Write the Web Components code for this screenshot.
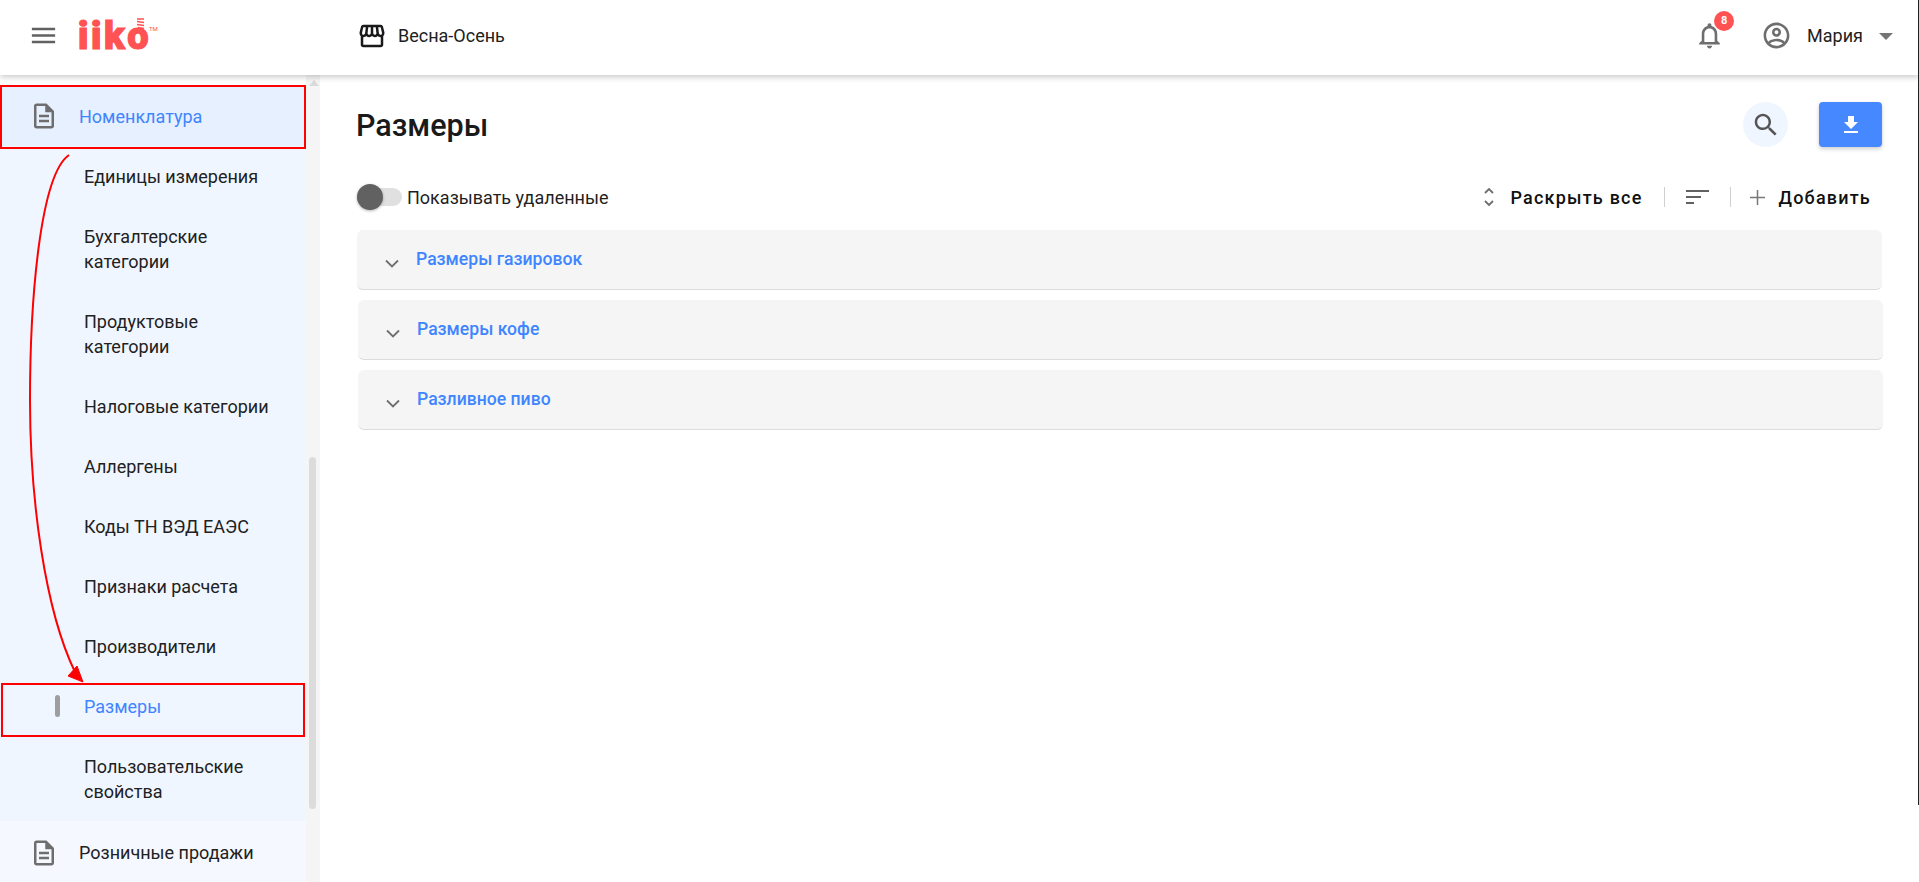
<!DOCTYPE html>
<html lang="ru">
<head>
<meta charset="utf-8">
<title>Размеры</title>
<style>
  html, body {
    margin: 0;
    height: 882px;
    overflow: hidden;
    background: #fff;
    font-family: Roboto, 'Liberation Sans', sans-serif;
    color: #1f1f1f;
  }
</style>
</head>
<body>

<app-page>
  <top-bar slot="header" store="Весна-Осень" user="Мария" count="8"></top-bar>

  <side-nav slot="nav">
    <nav-item icon="doc" active>Номенклатура</nav-item>
    <nav-item sub>Единицы измерения</nav-item>
    <nav-item sub>Бухгалтерские<br>категории</nav-item>
    <nav-item sub>Продуктовые<br>категории</nav-item>
    <nav-item sub>Налоговые категории</nav-item>
    <nav-item sub>Аллергены</nav-item>
    <nav-item sub>Коды ТН ВЭД ЕАЭС</nav-item>
    <nav-item sub>Признаки расчета</nav-item>
    <nav-item sub>Производители</nav-item>
    <nav-item sub active>Размеры</nav-item>
    <nav-item sub>Пользовательские<br>свойства</nav-item>
    <nav-item icon="doc" muted>Розничные продажи</nav-item>
  </side-nav>

  <sizes-view slot="main">
    <accordion-row>Размеры газировок</accordion-row>
    <accordion-row shifted>Размеры кофе</accordion-row>
    <accordion-row shifted>Разливное пиво</accordion-row>
  </sizes-view>

  <red-marks slot="overlay"></red-marks>
</app-page>

<script>
  const ICONS = {
    menu: 'M3 18h18v-2H3v2zm0-5h18v-2H3v2zm0-7v2h18V6H3z',
    doc: 'M14 2H6c-1.1 0-2 .9-2 2v16c0 1.1.89 2 1.99 2H18c1.1 0 2-.9 2-2V8l-6-6zm4 18H6V4h7v5h5v11zM8 15h8v2H8zm0-4h8v2H8z',
    store: 'M21.9 8.89l-1.05-4.37c-.22-.9-1-1.52-1.91-1.52H5.05c-.9 0-1.69.63-1.9 1.52L2.1 8.89c-.24 1.02-.02 2.06.62 2.88.08.11.19.19.28.29V19c0 1.1.9 2 2 2h14c1.1 0 2-.9 2-2v-6.94c.09-.09.2-.18.28-.28.64-.82.87-1.87.62-2.89zm-2.99-3.9l1.05 4.37c.1.42.01.84-.25 1.17-.14.18-.44.47-.94.47-.61 0-1.14-.49-1.21-1.14L16.98 5l1.93-.01zM13 5h1.96l.54 4.52c.05.39-.07.78-.33 1.07-.22.26-.54.41-.95.41-.67 0-1.22-.59-1.22-1.31V5zM8.49 9.52L9.04 5H11v4.69c0 .72-.55 1.31-1.29 1.31-.34 0-.65-.15-.89-.41-.25-.29-.37-.68-.33-1.07zm-4.45-.16L5.05 5h1.97l-.58 4.86c-.08.65-.6 1.14-1.21 1.14-.49 0-.8-.29-.93-.47-.27-.32-.36-.75-.26-1.17zM5 19v-6.03c.08.01.15.03.23.03.87 0 1.66-.36 2.24-.95.6.6 1.4.95 2.31.95.87 0 1.65-.36 2.23-.93.59.57 1.39.93 2.29.93.84 0 1.64-.35 2.24-.95.58.59 1.37.95 2.24.95.08 0 .15-.02.23-.03V19H5z',
    bell: 'M12 22c1.1 0 2-.9 2-2h-4c0 1.1.9 2 2 2zm6-6v-5c0-3.07-1.63-5.64-4.5-6.32V4c0-.83-.67-1.5-1.5-1.5s-1.5.67-1.5 1.5v.68C7.64 5.36 6 7.92 6 11v5l-2 2v1h16v-1l-2-2zm-2 1H8v-6c0-2.48 1.51-4.5 4-4.5s4 2.02 4 4.5v6z',
    user: 'M12 2C6.48 2 2 6.48 2 12s4.48 10 10 10 10-4.48 10-10S17.52 2 12 2zM7.07 18.28c.43-.9 3.05-1.78 4.93-1.78s4.51.88 4.93 1.78C15.57 19.36 13.86 20 12 20s-3.57-.64-4.93-1.72zm11.29-1.45c-1.43-1.74-4.9-2.33-6.36-2.33s-4.93.59-6.36 2.33C4.62 15.49 4 13.82 4 12c0-4.41 3.59-8 8-8s8 3.59 8 8c0 1.82-.62 3.49-1.64 4.83zM12 6c-1.94 0-3.5 1.56-3.5 3.5S10.06 13 12 13s3.5-1.56 3.5-3.5S13.94 6 12 6zm0 5c-.83 0-1.5-.67-1.5-1.5S11.17 8 12 8s1.5.67 1.5 1.5S12.83 11 12 11z',
    search: 'M15.5 14h-.79l-.28-.27C15.41 12.59 16 11.11 16 9.5 16 5.91 13.09 3 9.5 3S3 5.91 3 9.5 5.91 16 9.5 16c1.61 0 3.09-.59 4.23-1.57l.27.28v.79l5 4.99L20.49 19l-4.99-5zm-6 0C7.01 14 5 11.99 5 9.5S7.01 5 9.5 5 14 7.01 14 9.5 11.99 14 9.5 14z',
    download: 'M19 9h-4V3H9v6H5l7 7 7-7zM5 18v2h14v-2H5z'
  };

  function icon(name, size, color) {
    return `<svg width="${size}" height="${size}" viewBox="0 0 24 24" fill="${color}" style="display:block;flex:none"><path d="${ICONS[name]}"/></svg>`;
  }

  class AppPage extends HTMLElement {
    constructor() {
      super();
      this.attachShadow({ mode: 'open' }).innerHTML = `
        <style>
          :host {
            display: grid;
            grid-template-rows: 75px 807px;
            grid-template-columns: 320px 1599px;
            height: 882px;
            position: relative;
          }
          .head { grid-column: 1 / 3; z-index: 2; }
          .nav, .main { min-height: 0; overflow: hidden; }
        </style>
        <div class="head"><slot name="header"></slot></div>
        <div class="nav"><slot name="nav"></slot></div>
        <div class="main"><slot name="main"></slot></div>
        <slot name="overlay"></slot>`;
    }
  }

  class TopBar extends HTMLElement {
    connectedCallback() {
      this.attachShadow({ mode: 'open' }).innerHTML = `
        <style>
          :host {
            display: flex;
            align-items: center;
            height: 75px;
            box-sizing: border-box;
            padding-bottom: 4px;
            background: #fff;
            box-shadow: 0 2px 6px rgba(0,0,0,.22);
            font-size: 18px;
            color: #212121;
          }
          .burger { margin-left: 28px; }
          .logo {
            margin-left: 19px;
            width: 76px;
            position: relative;
            font-weight: 900;
            font-size: 38px;
            line-height: 40px;
            letter-spacing: 2.5px;
            color: #ff5252;
            -webkit-text-stroke: 1.2px #ff5252;
          }
          .logo small {
            position: absolute;
            left: 71px;
            top: 9px;
            font-size: 6px;
            line-height: 7px;
            letter-spacing: 0;
            font-weight: 400;
            -webkit-text-stroke: 0;
          }
          .logo svg { position: absolute; left: 58px; top: 2px; }
          .store { margin-left: 203px; }
          .name { margin-left: 11px; }
          .bell { margin-left: auto; position: relative; }
          .badge {
            position: absolute;
            left: 20px;
            top: -9px;
            width: 20px;
            height: 20px;
            border-radius: 50%;
            background: #ff5252;
            color: #fff;
            font-size: 11px;
            font-weight: 700;
            line-height: 20px;
            text-align: center;
          }
          .user { margin-left: 36px; }
          .who { margin-left: 15px; }
          .caret {
            margin: 1px 26px 0 16px;
            border-left: 7px solid transparent;
            border-right: 7px solid transparent;
            border-top: 7px solid #757575;
          }
        </style>
        <div class="burger">${icon('menu', 31, '#616161')}</div>
        <div class="logo">iiko<small>TM</small>
          <svg width="9" height="11" viewBox="0 0 9 11" fill="none" stroke="#ff5252" stroke-width="1.5"><path d="M1 1h7M1 3.500l7 1M1 6.500l7 1M2 9.500l6 1"/></svg>
        </div>
        <div class="store">${icon('store', 30, '#1a1a1a')}</div>
        <div class="name">${this.getAttribute('store')}</div>
        <div class="bell">${icon('bell', 31, '#6e6e6e')}<span class="badge">${this.getAttribute('count')}</span></div>
        <div class="user">${icon('user', 31, '#6e6e6e')}</div>
        <div class="who">${this.getAttribute('user')}</div>
        <div class="caret"></div>`;
    }
  }

  class SideNav extends HTMLElement {
    constructor() {
      super();
      this.attachShadow({ mode: 'open' }).innerHTML = `
        <style>
          :host { display: flex; height: 807px; }
          .list { width: 306px; padding-top: 11px; box-sizing: border-box; display: flex; flex-direction: column; }
          .track { width: 14px; background: #f5f5f5; position: relative; }
          .arrow {
            position: absolute; left: 3px; top: 5px;
            border-left: 5px solid transparent;
            border-right: 5px solid transparent;
            border-bottom: 6px solid #dadada;
          }
          .thumb {
            position: absolute; left: 3px; top: 382px;
            width: 7px; height: 352px;
            border-radius: 4px;
            background: #dcdcdc;
          }
        </style>
        <div class="list"><slot></slot></div>
        <div class="track"><div class="arrow"></div><div class="thumb"></div></div>`;
    }
  }

  class NavItem extends HTMLElement {
    connectedCallback() {
      const ic = this.getAttribute('icon');
      this.attachShadow({ mode: 'open' }).innerHTML = `
        <style>
          :host {
            display: flex;
            align-items: center;
            padding: 18px 0 17px 84px;
            background: #f0f6ff;
            font-size: 18px;
            line-height: 25px;
            color: #212121;
            position: relative;
          }
          :host([icon]) { padding: 0 0 0 29px; height: 60px; flex: none; }
          :host([icon][active]) { background: #e6f0fe; color: #3f85ff; }
          :host([sub][active]) { color: #3f85ff; }
          :host([muted]) { background: #f5f8fe; height: 61px; padding-top: 2px; box-sizing: border-box; }
          .ic { margin-right: 20px; }
          .mark {
            position: absolute;
            left: 55px; top: 19px;
            width: 5px; height: 22px;
            border-radius: 3px;
            background: #9e9e9e;
          }
        </style>
        ${ic ? `<div class="ic">${icon(ic, 30, '#6e6e6e')}</div>` : ''}
        ${this.hasAttribute('sub') && this.hasAttribute('active') ? '<div class="mark"></div>' : ''}
        <div><slot></slot></div>`;
    }
  }

  class SizesView extends HTMLElement {
    constructor() {
      super();
      this.attachShadow({ mode: 'open' }).innerHTML = `
        <style>
          :host {
            display: block;
            padding: 27px 36px 0 37px;
            color: #1f1f1f;
          }
          .title { display: flex; align-items: center; height: 45px; }
          h1 { margin: 2px 0 0 -1px; font-size: 30.5px; font-weight: 500; color: #1a1a1a; flex: 1; }
          .round {
            width: 45px; height: 45px; border-radius: 50%;
            background: #f0f6ff;
            display: flex; align-items: center; justify-content: center;
            margin-right: 31px;
          }
          .save {
            width: 63px; height: 45px; border-radius: 4px;
            background: #4588ff;
            box-shadow: 0 2px 4px rgba(0,0,0,.2);
            display: flex; align-items: center; justify-content: center;
            margin-right: 1px;
          }
          .tools { display: flex; align-items: center; height: 40px; margin-top: 30px; padding-right: 12px; }
          .tool { font-size: 18px; font-weight: 500; letter-spacing: 1.2px; color: #111; }
          .sep { width: 1px; height: 20px; background: #d0d0d0; }
          .list { display: flex; flex-direction: column; gap: 10px; margin-top: 13px; }
        </style>
        <div class="title">
          <h1>Размеры</h1>
          <div class="round">${icon('search', 30, '#555')}</div>
          <div class="save">${icon('download', 24, '#fff')}</div>
        </div>
        <div class="tools">
          <del-toggle>Показывать удаленные</del-toggle>
          <svg style="margin-left:auto" width="10" height="20" viewBox="0 0 10 20" fill="none" stroke="#6e6e6e" stroke-width="1.8"><path d="M1 6l4-4 4 4M1 14l4 4 4-4"/></svg>
          <span class="tool" style="margin-left:16px">Раскрыть все</span>
          <span class="sep" style="margin-left:21px"></span>
          <svg style="margin-left:21px" width="23" height="16" viewBox="0 0 23 16" fill="#616161"><rect width="23" height="2" y="1"/><rect width="15" height="2" y="7"/><rect width="8" height="2" y="13"/></svg>
          <span class="sep" style="margin-left:21px"></span>
          <svg style="margin-left:19px" width="15" height="15" viewBox="0 0 15 15" stroke="#777" stroke-width="1.5"><path d="M7.5 0v15M0 7.500h15"/></svg>
          <span class="tool" style="margin-left:14px">Добавить</span>
        </div>
        <div class="list"><slot></slot></div>`;
    }
  }

  class DelToggle extends HTMLElement {
    constructor() {
      super();
      this.attachShadow({ mode: 'open' }).innerHTML = `
        <style>
          :host { display: flex; align-items: center; font-size: 18px; color: #1f1f1f; }
          .sw { width: 45px; height: 26px; position: relative; margin-right: 5px; }
          .bar { position: absolute; left: 0; right: 0; top: 4px; height: 18px; border-radius: 9px; background: #e0e0e0; }
          .knob {
            position: absolute; left: 0; top: 0; width: 26px; height: 26px; border-radius: 50%;
            background: #616161;
            box-shadow: 0 1px 3px rgba(0,0,0,.3);
          }
        </style>
        <div class="sw"><div class="bar"></div><div class="knob"></div></div>
        <slot></slot>`;
    }
  }

  class AccordionRow extends HTMLElement {
    constructor() {
      super();
      this.attachShadow({ mode: 'open' }).innerHTML = `
        <style>
          :host {
            display: flex;
            height: 60px;
            box-sizing: border-box;
            margin-right: 1px;
            align-items: center;
            background: #f5f5f5;
            border-radius: 6px;
            border-bottom: 1px solid #dcdcdc;
            font-size: 17.6px;
            font-weight: 500;
            color: #3f85ff;
          }
          :host([shifted]) { margin: 0 0 0 1px; }
          svg { margin: 8px 17px 0 28px; flex: none; }
          div { margin-top: -2px; }
        </style>
        <svg width="14" height="10" viewBox="0 0 14 10" fill="none" stroke="#6e6e6e" stroke-width="1.8"><path d="M1 1.500l6 6 6-6"/></svg>
        <div><slot></slot></div>`;
    }
  }

  // red annotation boxes and the arrow drawn over the screenshot
  class RedMarks extends HTMLElement {
    constructor() {
      super();
      this.attachShadow({ mode: 'open' }).innerHTML = `
        <style>
          :host { position: absolute; left: 0; top: 0; width: 1919px; height: 882px; pointer-events: none; z-index: 5; }
          svg { display: block; }
          .edge { position: absolute; left: 1918px; top: 0; width: 1px; height: 805px; background: #222; }
        </style>
        <svg width="1919" height="882" viewBox="0 0 1919 882" fill="none" stroke="#f00" stroke-width="2">
          <rect x="1" y="86" width="304" height="62"/>
          <rect x="2" y="684" width="302" height="52"/>
          <path d="M69 155C40 175 30 300 30 400C30 500 45 610 75 672"/>
          <path d="M83 682L68 676L77 666Z" fill="#f00" stroke-width="1"/>
        </svg>
        <div class="edge"></div>`;
    }
  }

  customElements.define('app-page', AppPage);
  customElements.define('top-bar', TopBar);
  customElements.define('side-nav', SideNav);
  customElements.define('nav-item', NavItem);
  customElements.define('sizes-view', SizesView);
  customElements.define('del-toggle', DelToggle);
  customElements.define('accordion-row', AccordionRow);
  customElements.define('red-marks', RedMarks);
</script>
</body>
</html>
